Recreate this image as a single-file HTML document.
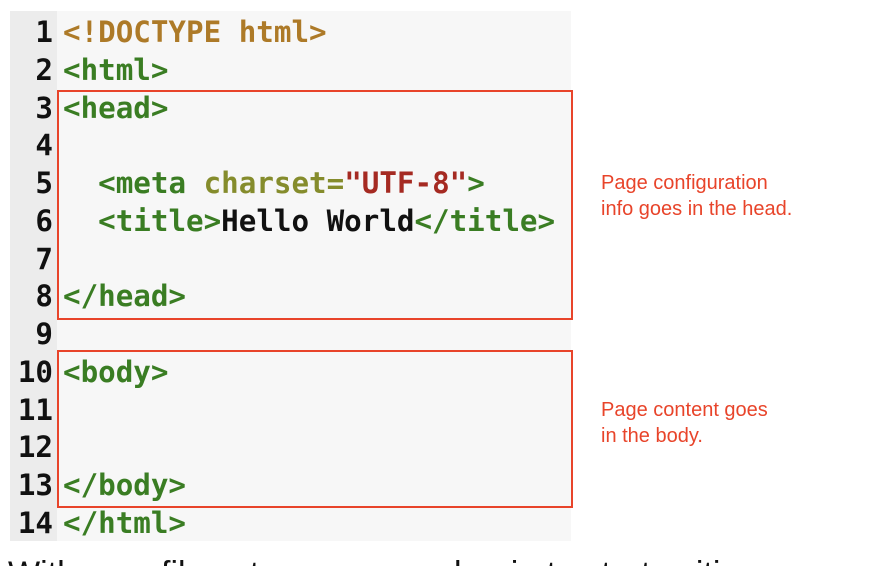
<!DOCTYPE html>
<html style="height:566px;overflow:hidden"><head><style>
body{margin:0;width:880px;height:566px;background:#fff;position:relative;overflow:hidden}
.code{position:absolute;left:10px;top:11px;width:561px;height:530px;background:#f7f7f7}
.gut{position:absolute;left:10px;top:11px;width:47px;height:530px;background:#ececec}
.ln{position:absolute;font:bold 29.2px/37.77px "DejaVu Sans Mono","Liberation Mono",monospace;white-space:pre;top:14px}
.nums{left:10px;width:43px;text-align:right;color:#111}
.src{left:63px}
.d{color:#ad7a28}.g{color:#3a7d23}.a{color:#858c2c}.s{color:#a52a22}.k{color:#111}
.box{position:absolute;border:2px solid #e8442a;left:57px;width:512px}
.note{position:absolute;left:601px;font:20px/26px "Liberation Sans",sans-serif;color:#e8442a}
.clip{position:absolute;left:0;top:550px;width:880px;height:16px;overflow:hidden}
.bot{position:absolute;left:8px;top:4px;font:34px/40px "Liberation Sans",sans-serif;color:#111;white-space:nowrap}
</style></head><body>
<div class="code"></div><div class="gut"></div>
<div class="ln nums">1
2
3
4
5
6
7
8
9
10
11
12
13
14</div>
<div class="ln src"><span class="d">&lt;!DOCTYPE html&gt;</span>
<span class="g">&lt;html&gt;</span>
<span class="g">&lt;head&gt;</span>

  <span class="g">&lt;meta</span> <span class="a">charset=</span><span class="s">"UTF-8"</span><span class="g">&gt;</span>
  <span class="g">&lt;title&gt;</span><span class="k">Hello World</span><span class="g">&lt;/title&gt;</span>

<span class="g">&lt;/head&gt;</span>

<span class="g">&lt;body&gt;</span>


<span class="g">&lt;/body&gt;</span>
<span class="g">&lt;/html&gt;</span></div>
<div class="box" style="top:90px;height:226px"></div>
<div class="box" style="top:350px;height:154px"></div>
<div class="note" style="top:170px">Page configuration<br>info goes in the head.</div>
<div class="note" style="top:397px">Page content goes<br>in the body.</div>
<div class="clip"><div class="bot">With your file set up, you can begin to start writing</div></div>
</body></html>
